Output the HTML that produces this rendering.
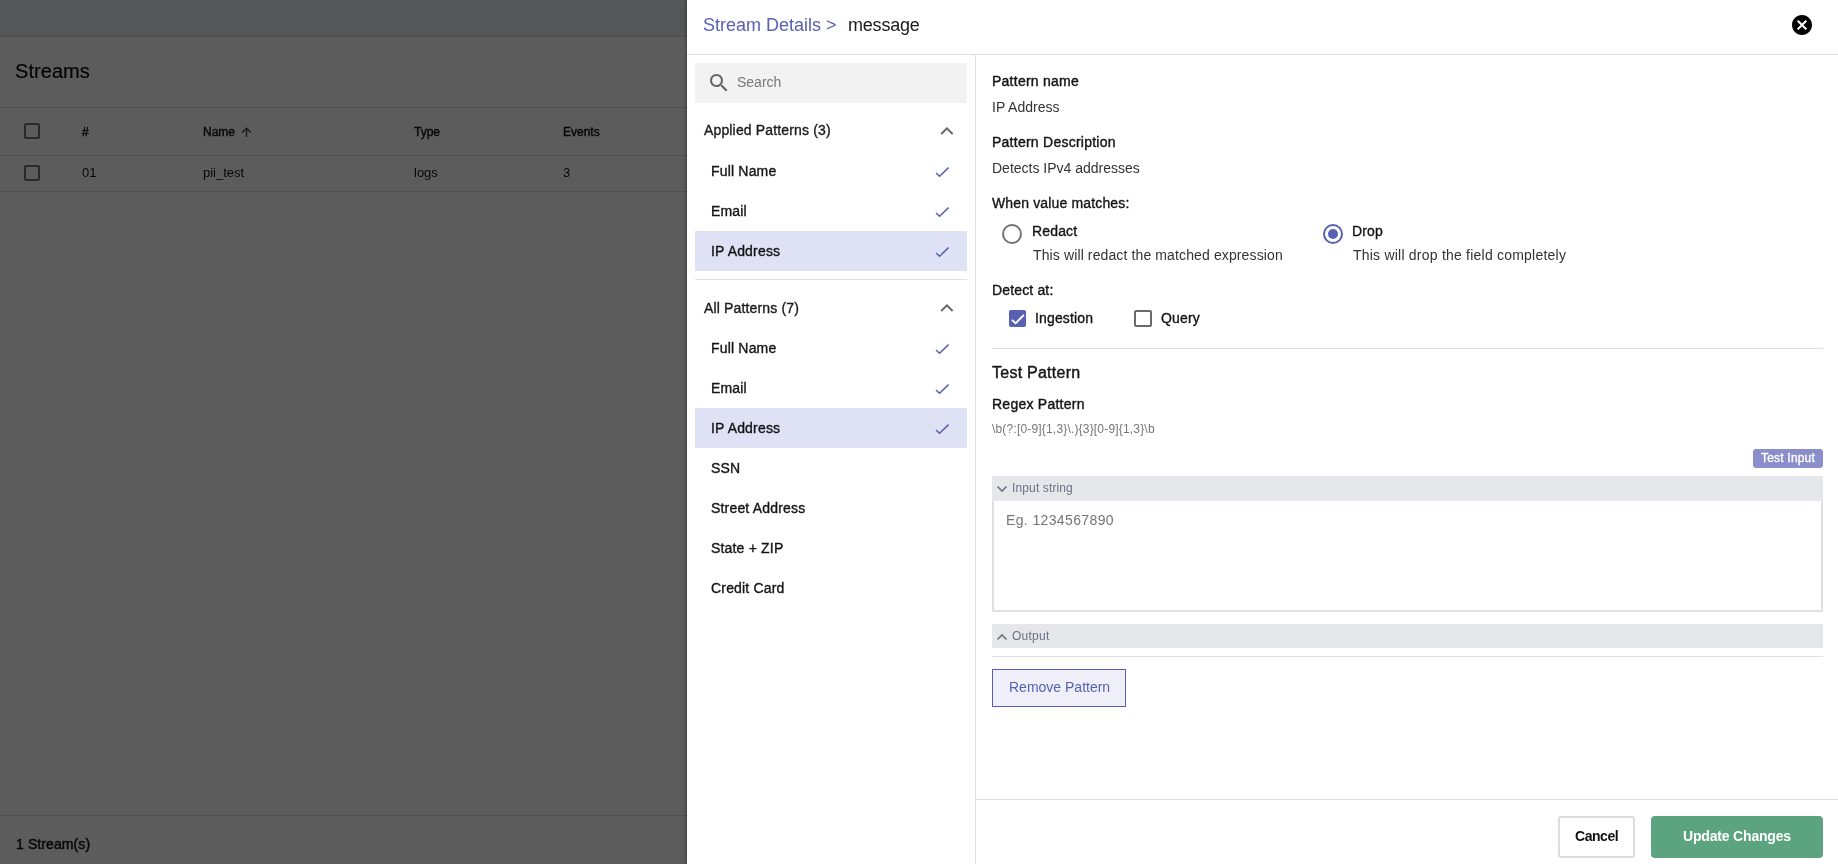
<!DOCTYPE html>
<html><head><meta charset="utf-8">
<style>
*{box-sizing:border-box;margin:0;padding:0}
html,body{width:1838px;height:864px;overflow:hidden;background:#fff;font-family:"Liberation Sans",sans-serif;color:#141414}
.a{position:absolute}
svg.a{z-index:2}
.t{position:absolute;white-space:pre;line-height:1;will-change:transform}
#page{position:absolute;left:0;top:0;width:1838px;height:864px;background:#fff}
#overlay{position:absolute;left:0;top:0;width:1838px;height:864px;background:rgba(0,0,0,0.64)}
#panel{position:absolute;left:687px;top:0;width:1151px;height:864px;background:#fff;box-shadow:-1px 0 3px rgba(0,0,0,0.35)}
.hl{position:absolute;height:1px;background:#e0e0e0}
.vl{position:absolute;width:1px;background:#e0e0e0}
.item{font-size:14px;font-weight:400;color:#141414;-webkit-text-stroke:0.35px #141414;letter-spacing:0.18px}
.m{-webkit-text-stroke:0.35px currentColor;letter-spacing:0.15px}
.sb{-webkit-text-stroke:0.4px currentColor;letter-spacing:0.25px}
.sel{position:absolute;left:8px;width:272px;height:40px;background:#dfe1f5}
</style></head>
<body>
<div id="page">
  <!-- top bar -->
  <div class="a" style="left:0;top:0;width:1838px;height:36px;background:#eaedf1"></div>
  <div class="hl" style="left:0;top:36px;width:1838px;background:#d8d8d8"></div>
  <div class="t" style="left:15px;top:61.3px;font-size:20px;color:#0a0a0a;-webkit-text-stroke:0.2px #0a0a0a;letter-spacing:0.05px">Streams</div>
  <div class="hl" style="left:0;top:107px;width:1838px;background:#dcdcdc"></div>
  <div class="hl" style="left:0;top:155px;width:1838px;background:#dcdcdc"></div>
  <div class="hl" style="left:0;top:191px;width:1838px;background:#dcdcdc"></div>
  <div class="a" style="left:24px;top:123px;width:16px;height:16px;border:2px solid #757575;border-radius:2px"></div>
  <div class="a" style="left:24px;top:165px;width:16px;height:16px;border:2px solid #757575;border-radius:2px"></div>
  <div class="t" style="left:82px;top:126.1px;font-size:12px;-webkit-text-stroke:0.45px #1a1a1a">#</div>
  <div class="t" style="left:203px;top:126.1px;font-size:12px;-webkit-text-stroke:0.45px #1a1a1a">Name</div>
  <svg class="a" style="left:240px;top:125.5px" width="13" height="13" viewBox="0 0 13 13"><path d="M6.5 11V2.3M2.3 6.5l4.2-4.2 4.2 4.2" fill="none" stroke="#1a1a1a" stroke-width="1.4"/></svg>
  <div class="t" style="left:414px;top:126.1px;font-size:12px;-webkit-text-stroke:0.45px #1a1a1a">Type</div>
  <div class="t" style="left:563px;top:126.1px;font-size:12px;-webkit-text-stroke:0.45px #1a1a1a">Events</div>
  <div class="t" style="left:82px;top:166.2px;font-size:13px">01</div>
  <div class="t" style="left:203px;top:166.2px;font-size:13px">pii_test</div>
  <div class="t" style="left:414px;top:166.2px;font-size:13px">logs</div>
  <div class="t" style="left:563px;top:166.2px;font-size:13px">3</div>
  <div class="hl" style="left:0;top:815px;width:1838px;background:#dcdcdc"></div>
  <div class="t" style="left:15.5px;top:837px;font-size:14px;-webkit-text-stroke:0.5px #1a1a1a;letter-spacing:0.1px">1 Stream(s)</div>
</div>
<div id="overlay"></div>

<div id="panel">
  <!-- header -->
  <div class="t" style="left:15.5px;top:15.5px;font-size:18px;color:#5960b2">Stream Details &gt;</div>
  <div class="t" style="left:161px;top:15.5px;font-size:18px;color:#1a1a1a;letter-spacing:-0.2px">message</div>
  <svg class="a" style="left:1103px;top:13px" width="24" height="24" viewBox="0 0 24 24"><path fill="#000" d="M12 2C6.47 2 2 6.47 2 12s4.47 10 10 10 10-4.47 10-10S17.53 2 12 2zm5 13.59L15.59 17 12 13.41 8.41 17 7 15.59 10.59 12 7 8.41 8.41 7 12 10.59 15.59 7 17 8.41 13.41 12 17 15.59z"/></svg>
  <div class="hl" style="left:0;top:54px;width:1151px"></div>
  <!-- sidebar -->
  <div class="vl" style="left:288px;top:55px;height:809px"></div>
  <div class="a" style="left:8px;top:63px;width:272px;height:40px;background:#f2f2f2"></div>
  <svg class="a" style="left:20px;top:71px" width="24" height="24" viewBox="0 0 24 24"><path fill="#666" d="M15.5 14h-.79l-.28-.27C15.41 12.59 16 11.11 16 9.5 16 5.91 13.09 3 9.5 3S3 5.91 3 9.5 5.91 16 9.5 16c1.61 0 3.09-.59 4.23-1.57l.27.28v.79l5 4.99L20.49 19l-4.99-5zm-6 0C7.01 14 5 11.99 5 9.5S7.01 5 9.5 5 14 7.01 14 9.5 11.99 14 9.5 14z"/></svg>
  <div class="t" style="left:50px;top:75px;font-size:14px;color:#777">Search</div>

  <div class="t m" style="left:16.5px;top:123.3px;font-size:14px;color:#1a1a1a">Applied Patterns (3)</div>
  <svg class="a" style="left:253px;top:126.5px" width="14" height="9" viewBox="0 0 14 9"><path d="M1.2 7L6.9 1.3L12.6 7" fill="none" stroke="#666" stroke-width="1.9"/></svg>
  <svg class="a" style="left:253px;top:303.5px" width="14" height="9" viewBox="0 0 14 9"><path d="M1.2 7L6.9 1.3L12.6 7" fill="none" stroke="#666" stroke-width="1.9"/></svg>
  
  <div class="sel" style="top:231px"></div>
  <div class="t item" style="left:24px;top:164.3px">Full Name</div>
  <div class="t item" style="left:24px;top:204.3px">Email</div>
  <div class="t item" style="left:24px;top:244.3px">IP Address</div>
  <svg class="a" style="left:246px;top:164px" width="16" height="16" viewBox="0 0 16 16"><path d="M3 9l3.6 3.2L15.5 3.6" fill="none" stroke="#5960b2" stroke-width="1.5"/></svg>
  <svg class="a" style="left:246px;top:204px" width="16" height="16" viewBox="0 0 16 16"><path d="M3 9l3.6 3.2L15.5 3.6" fill="none" stroke="#5960b2" stroke-width="1.5"/></svg>
  <svg class="a" style="left:246px;top:244px" width="16" height="16" viewBox="0 0 16 16"><path d="M3 9l3.6 3.2L15.5 3.6" fill="none" stroke="#5960b2" stroke-width="1.5"/></svg>
  <svg class="a" style="left:246px;top:341px" width="16" height="16" viewBox="0 0 16 16"><path d="M3 9l3.6 3.2L15.5 3.6" fill="none" stroke="#5960b2" stroke-width="1.5"/></svg>
  <svg class="a" style="left:246px;top:381px" width="16" height="16" viewBox="0 0 16 16"><path d="M3 9l3.6 3.2L15.5 3.6" fill="none" stroke="#5960b2" stroke-width="1.5"/></svg>
  <svg class="a" style="left:246px;top:421px" width="16" height="16" viewBox="0 0 16 16"><path d="M3 9l3.6 3.2L15.5 3.6" fill="none" stroke="#5960b2" stroke-width="1.5"/></svg>
  
  <div class="hl" style="left:8px;top:279px;width:272px"></div>

  <div class="t m" style="left:16.5px;top:300.5px;font-size:14px;color:#1a1a1a">All Patterns (7)</div>
  <div class="sel" style="top:408px"></div>
  <div class="t item" style="left:24px;top:341.3px">Full Name</div>
  <div class="t item" style="left:24px;top:381.3px">Email</div>
  <div class="t item" style="left:24px;top:421.3px">IP Address</div>
  <div class="t item" style="left:24px;top:461.3px">SSN</div>
  <div class="t item" style="left:24px;top:501.3px">Street Address</div>
  <div class="t item" style="left:24px;top:541.3px">State + ZIP</div>
  <div class="t item" style="left:24px;top:581.3px">Credit Card</div>

  <!-- details -->
  <div class="t sb" style="left:305px;top:74.2px;font-size:14px">Pattern name</div>
  <div class="t" style="left:305px;top:100px;font-size:14px;color:#333">IP Address</div>
  <div class="t sb" style="left:305px;top:135.3px;font-size:14px">Pattern Description</div>
  <div class="t" style="left:305px;top:160.7px;font-size:14px;color:#333">Detects IPv4 addresses</div>
  <div class="t m" style="left:305px;top:196.2px;font-size:14px">When value matches:</div>

  <div class="a" style="left:315px;top:224px;width:20px;height:20px;border:2px solid #757575;border-radius:50%"></div>
  <div class="t m" style="left:344.5px;top:224.2px;font-size:14px">Redact</div>
  <div class="t" style="left:346px;top:248.2px;font-size:14px;color:#333;letter-spacing:0.12px">This will redact the matched expression</div>
  <div class="a" style="left:636px;top:224px;width:20px;height:20px;border:2px solid #5960b2;border-radius:50%"></div>
  <div class="a" style="left:641px;top:229px;width:10px;height:10px;background:#5960b2;border-radius:50%"></div>
  <div class="t m" style="left:665px;top:224.2px;font-size:14px">Drop</div>
  <div class="t" style="left:666px;top:248.2px;font-size:14px;color:#333;letter-spacing:0.22px">This will drop the field completely</div>

  <div class="t m" style="left:305px;top:283px;font-size:14px">Detect at:</div>
  <div class="a" style="left:322px;top:310px;width:17px;height:17px;background:#5960b2;border-radius:2px"></div>
  <svg class="a" style="left:322px;top:310px" width="17" height="17" viewBox="0 0 17 17"><path d="M2.9 9.9L6.6 13.3L14.9 4.9" fill="none" stroke="#fff" stroke-width="1.9"/></svg>
  <div class="t m" style="left:348px;top:311px;font-size:14px">Ingestion</div>
  <div class="a" style="left:447px;top:310px;width:18px;height:17px;border:2px solid #6a6a6a;border-radius:2px"></div>
  <div class="t m" style="left:474px;top:311px;font-size:14px">Query</div>

  <div class="hl" style="left:305px;top:348px;width:831px"></div>
  <div class="t sb" style="left:305px;top:364.5px;font-size:16px">Test Pattern</div>
  <div class="t sb" style="left:305px;top:397.4px;font-size:14px">Regex Pattern</div>
  <div class="t" style="left:305px;top:423px;font-size:12px;color:#777;letter-spacing:0.18px">\b(?:[0-9]{1,3}\.){3}[0-9]{1,3}\b</div>

  <div class="a" style="left:1066px;top:449px;width:70px;height:19px;background:#8a8fcc;border-radius:3px"></div>
  <div class="t" style="left:1074px;top:451.8px;font-size:12px;color:#fff;-webkit-text-stroke:0.35px #fff;letter-spacing:0.2px">Test Input</div>

  <div class="a" style="left:305px;top:476px;width:831px;height:25px;background:#e5e7eb"></div>
  <svg class="a" style="left:309px;top:484px" width="12" height="10" viewBox="0 0 12 10"><path d="M1.5 2.5l4.5 4.5 4.5-4.5" fill="none" stroke="#6b7280" stroke-width="1.6"/></svg>
  <div class="t" style="left:325px;top:481.5px;font-size:12px;color:#6b7280;letter-spacing:0.13px">Input string</div>
  <div class="a" style="left:305px;top:501px;width:831px;height:111px;border:2px solid #e0e0e0;border-top:none"></div>
  <div class="t" style="left:319px;top:513px;font-size:14px;color:#757575;letter-spacing:0.37px">Eg. 1234567890</div>

  <div class="a" style="left:305px;top:624px;width:831px;height:24px;background:#e5e7eb"></div>
  <svg class="a" style="left:309px;top:632px" width="12" height="10" viewBox="0 0 12 10"><path d="M1.5 7.5l4.5-4.5 4.5 4.5" fill="none" stroke="#6b7280" stroke-width="1.6"/></svg>
  <div class="t" style="left:325px;top:629.8px;font-size:12px;color:#6b7280;letter-spacing:0.25px">Output</div>
  <div class="hl" style="left:305px;top:656px;width:831px"></div>

  <div class="a" style="left:305px;top:669px;width:134px;height:38px;background:#eeeff8;border:1px solid #5960b2"></div>
  <div class="t" style="left:322px;top:680px;font-size:14px;color:#5960b2">Remove Pattern</div>

  <!-- footer -->
  <div class="hl" style="left:288px;top:799px;width:863px"></div>
  <div class="a" style="left:870.5px;top:816px;width:77.5px;height:41.5px;background:#fff;border:2px solid #dcdcdc;border-radius:3px"></div>
  <div class="t" style="left:888px;top:829.2px;font-size:14px;font-weight:700;color:#111;letter-spacing:-0.45px">Cancel</div>
  <div class="a" style="left:964px;top:816px;width:172px;height:42px;background:#5ba47f;border-radius:4px"></div>
  <div class="t" style="left:996px;top:829.2px;font-size:14px;font-weight:700;color:#fff;letter-spacing:-0.18px">Update Changes</div>
</div>
</body></html>
